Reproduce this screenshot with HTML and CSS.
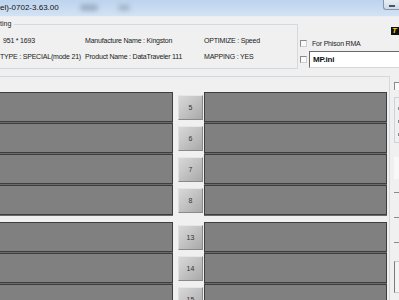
FILE: index.html
```html
<!DOCTYPE html>
<html>
<head>
<meta charset="utf-8">
<link rel="stylesheet" href="styles.css">
</head>
<body>
<div class="window">
  <div class="titlebar">
    <span class="title">el)-0702-3.63.00</span>
    <span class="blur b1"></span>
    <span class="blur b2"></span>
    <span class="minbtn"><span class="dash"></span></span>
  </div>
  <div class="top">
    <fieldset class="group1">
      <legend>ting</legend>
      <div class="info">
        <div class="row">
          <span class="c1 indent">951 * 1693</span>
          <span class="c2">Manufacture Name : Kingston</span>
          <span class="c3">OPTIMIZE : Speed</span>
        </div>
        <div class="row">
          <span class="c1">TYPE : SPECIAL(mode 21)</span>
          <span class="c2">Product Name : DataTraveler 111</span>
          <span class="c3">MAPPING : YES</span>
        </div>
      </div>
    </fieldset>
    <div class="side">
      <div class="logo">T</div>
      <div class="chk"><span class="box"></span><span class="lbl">For Phison RMA</span></div>
      <div class="chk2"><span class="box"></span><div class="textbox">MP.ini</div></div>
    </div>
  </div>
  <div class="bottom">
    <fieldset class="group2">
      <div class="slot"><div class="bar left"></div><div class="btn">5</div><div class="bar right"></div></div>
      <div class="slot"><div class="bar left"></div><div class="btn">6</div><div class="bar right"></div></div>
      <div class="slot"><div class="bar left"></div><div class="btn">7</div><div class="bar right"></div></div>
      <div class="slot last"><div class="bar left"></div><div class="btn">8</div><div class="bar right"></div></div>
      <div class="slot"><div class="bar left"></div><div class="btn">13</div><div class="bar right"></div></div>
      <div class="slot"><div class="bar left"></div><div class="btn">14</div><div class="bar right"></div></div>
      <div class="slot"><div class="bar left"></div><div class="btn">15</div><div class="bar right"></div></div>
    </fieldset>
    <div class="edge">
      <span class="ebox"></span>
      <span class="elist"><i></i><i></i><i></i></span>
      <span class="ewhite"></span>
      <span class="tick t1"></span>
      <span class="tick"></span>
      <span class="tick"></span>
      <span class="ebox2"></span>
    </div>
  </div>
</div>
</body>
</html>
```

FILE: styles.css
```css
html, body {
  margin: 0;
  padding: 0;
  background: #f0f0f0;
  overflow: hidden;
}
body {
  font-family: "Liberation Sans", Arial, sans-serif;
  color: #1a1a1a;
}
.window {
  width: 399px;
  height: 300px;
  overflow: hidden;
}
.titlebar {
  height: 17px;
  display: flex;
  align-items: flex-start;
  background: linear-gradient(to bottom, #bcd4ee 0%, #cadcf1 60%, #d3e3f4 100%);
  border-bottom: 1px solid #e9eef4;
  box-sizing: border-box;
  overflow: hidden;
}
.title {
  font-size: 8px;
  line-height: 9px;
  margin-top: 3px;
  color: #111;
  white-space: nowrap;
}
.blur {
  display: block;
  height: 7px;
  margin-top: 4px;
  background: #9fb2c8;
  filter: blur(2px);
  border-radius: 3px;
}
.b1 { width: 18px; margin-left: 21px; }
.b2 { width: 12px; margin-left: 20px; background: #a8bace; }
.minbtn {
  margin-left: auto;
  width: 16px;
  height: 10px;
  box-sizing: border-box;
  border: 1px solid #8196b0;
  border-top: none;
  border-right: none;
  border-bottom-left-radius: 3px;
  background: linear-gradient(to bottom, #e8eef5, #cdd9e6);
  display: flex;
  justify-content: center;
  align-items: flex-start;
}
.dash {
  width: 6px;
  height: 2px;
  margin-top: 5px;
  background: #4a5563;
}

.top {
  display: flex;
  align-items: flex-start;
  height: 58px;
}
fieldset {
  margin: 0;
  padding: 0;
  min-width: 0;
}
.group1 {
  width: 298px;
  box-sizing: border-box;
  margin-top: 3px;
  border: 1px solid #d4d9de;
  border-left: none;
  padding: 0 0 4px 0;
}
.group1 legend {
  font-size: 7px;
  line-height: 8px;
  padding: 0 3px 0 0;
  margin: 0;
  color: #222;
}
.info {
  padding-top: 4px;
}
.row {
  display: flex;
  height: 16px;
  align-items: center;
  font-size: 7px;
  letter-spacing: -0.2px;
  white-space: nowrap;
}
.c1 { width: 85px; }
.c1.indent { padding-left: 3px; width: 82px; }
.c2 { width: 119px; }
.c3 { flex: 1; }

.side {
  flex: 1;
  display: flex;
  flex-direction: column;
  padding-left: 2px;
}
.logo {
  align-self: flex-end;
  margin-top: 10px;
  width: 7px;
  height: 8px;
  background: #111;
  color: #e8d21a;
  font-size: 8px;
  line-height: 8px;
  font-weight: bold;
  font-style: italic;
  padding-left: 1px;
  overflow: hidden;
}
.chk {
  display: flex;
  align-items: center;
  margin-top: 5px;
  height: 7px;
}
.box {
  width: 7px;
  height: 7px;
  box-sizing: border-box;
  border: 1px solid #8a8a8a;
  border-right-color: #cfcfcf;
  border-bottom-color: #cfcfcf;
  background: #fafafa;
  flex: none;
}
.lbl {
  font-size: 7px;
  line-height: 7px;
  margin-left: 5px;
  letter-spacing: -0.2px;
  white-space: nowrap;
  color: #222;
}
.chk2 {
  display: flex;
  align-items: center;
  margin-top: 4px;
  height: 17px;
}
.textbox {
  margin-left: 2px;
  flex: 1;
  height: 17px;
  box-sizing: border-box;
  border: 1px solid #6a6a6a;
  border-right: none;
  border-bottom-color: #d6d6d6;
  background: #fff;
  font-size: 8px;
  font-weight: bold;
  line-height: 15px;
  padding-left: 3px;
  color: #111;
  letter-spacing: -0.2px;
}

.bottom {
  display: flex;
  align-items: flex-start;
}
.group2 {
  margin-top: 1px;
  width: 390px;
  box-sizing: border-box;
  border: 1px solid #d4d9de;
  border-left: none;
  border-bottom: none;
  padding: 15px 2px 0 0;
  flex: none;
}
.slot {
  display: flex;
  align-items: flex-start;
  height: 30px;
  margin-bottom: 1px;
}
.slot.last {
  margin-bottom: 7px;
}
.bar {
  height: 30px;
  box-sizing: border-box;
  background: #808080;
  border: 1px solid #3e3e3e;
  box-shadow: 0 1px 0 #6a6a6a;
}
.bar.left {
  width: 173px;
  border-left: none;
}
.bar.right {
  width: 183px;
  margin-left: 1px;
}
.btn {
  margin-left: 5px;
  margin-top: 3px;
  width: 25px;
  height: 25px;
  box-sizing: border-box;
  border-top: 1px solid #e6e6e6;
  border-left: 1px solid #dedede;
  border-right: 1px solid #8a8a8a;
  border-bottom: 1px solid #8a8a8a;
  background: linear-gradient(135deg, #d8d8d8 0%, #c4c4c4 45%, #a9a9a9 100%);
  font-size: 7px;
  line-height: 23px;
  text-align: center;
  color: #333;
}

.edge {
  flex: 1;
  display: flex;
  flex-direction: column;
  padding-left: 4px;
  overflow: hidden;
}
.ebox {
  margin-top: 7px;
  width: 10px;
  height: 7px;
  border-top: 1px solid #8a8a8a;
  border-left: 1px solid #8a8a8a;
  background: #fafafa;
}
.elist {
  margin-top: 7px;
  width: 10px;
  height: 46px;
  box-sizing: border-box;
  border: 1px solid #cfd3d7;
  display: flex;
  flex-direction: column;
  padding: 9px 0 0 3px;
  gap: 10px;
}
.elist i {
  display: block;
  width: 2px;
  height: 3px;
  background: #8a8a8a;
}
.ewhite {
  margin-top: 14px;
  width: 10px;
  height: 22px;
  background: #f8f8f8;
}
.tick {
  width: 5px;
  height: 1px;
  background: #8a8a8a;
  margin-top: 24px;
}
.tick.t1 {
  margin-top: 13px;
}
.ebox2 {
  margin-top: 18px;
  width: 10px;
  height: 30px;
  border-left: 1px solid #7a7a7a;
  border-top: 1px solid #c8c8c8;
  border-bottom: 1px solid #c8c8c8;
  background: #f4f4f4;
}
```
